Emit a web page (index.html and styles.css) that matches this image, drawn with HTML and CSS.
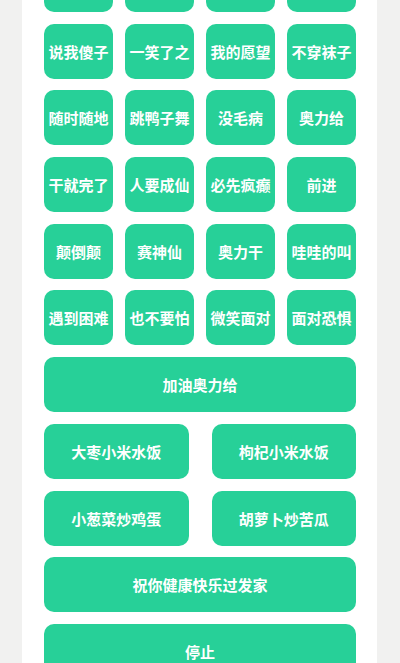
FILE: index.html
```html
<!DOCTYPE html>
<html lang="zh-CN">
<head>
    <meta charset="UTF-8">
    <meta name="viewport" content="width=device-width, initial-scale=1.0">
    <title>奥力给</title>
    <link rel="stylesheet" href="styles.css">
</head>
<body>
    <div class="panel">
        <div class="board">
            <div class="grid-4">
                <!-- first row is scrolled out of view -->
                <button class="btn"></button>
                <button class="btn"></button>
                <button class="btn"></button>
                <button class="btn"></button>

                <button class="btn">说我傻子</button>
                <button class="btn">一笑了之</button>
                <button class="btn">我的愿望</button>
                <button class="btn">不穿袜子</button>

                <button class="btn">随时随地</button>
                <button class="btn">跳鸭子舞</button>
                <button class="btn">没毛病</button>
                <button class="btn">奥力给</button>

                <button class="btn">干就完了</button>
                <button class="btn">人要成仙</button>
                <button class="btn">必先疯癫</button>
                <button class="btn">前进</button>

                <button class="btn">颠倒颠</button>
                <button class="btn">赛神仙</button>
                <button class="btn">奥力干</button>
                <button class="btn">哇哇的叫</button>

                <button class="btn">遇到困难</button>
                <button class="btn">也不要怕</button>
                <button class="btn">微笑面对</button>
                <button class="btn">面对恐惧</button>
            </div>

            <button class="btn">加油奥力给</button>

            <div class="grid-2">
                <button class="btn">大枣小米水饭</button>
                <button class="btn">枸杞小米水饭</button>
                <button class="btn">小葱菜炒鸡蛋</button>
                <button class="btn">胡萝卜炒苦瓜</button>
            </div>

            <button class="btn">祝你健康快乐过发家</button>
            <button class="btn">停止</button>
        </div>
    </div>
</body>
</html>
```

FILE: styles.css
```css
body {
    margin: 0;
    background-color: #f1f1f0;
    font-family: "Noto Sans CJK SC", "Noto Sans", sans-serif;
}
.panel {
    margin: 0 23px 0 22px;
    padding: 0 21px 40px 22px;
    background-color: #ffffff;
}
.board {
    display: flex;
    flex-direction: column;
    gap: 11.7px;
    margin-top: -43px;
}
.grid-4 {
    display: grid;
    grid-template-columns: repeat(4, 1fr);
    column-gap: 12px;
    row-gap: 11.7px;
}
.grid-2 {
    display: grid;
    grid-template-columns: repeat(2, 1fr);
    column-gap: 23px;
    row-gap: 11.7px;
}
.btn {
    height: 55px;
    padding: 0;
    border: none;
    border-radius: 10px;
    background-color: #27d098;
    color: #ffffff;
    font-family: inherit;
    font-size: 15px;
    font-weight: bold;
    white-space: nowrap;
}
```
